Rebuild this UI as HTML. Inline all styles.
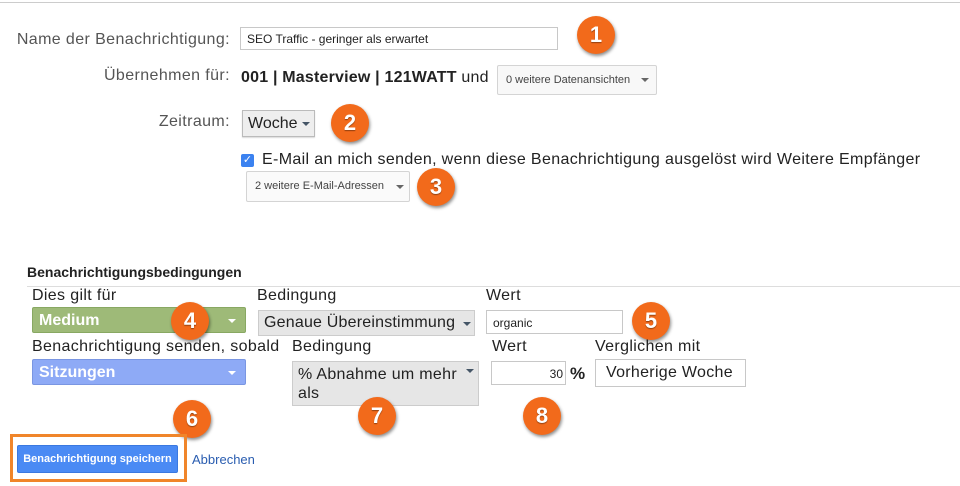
<!DOCTYPE html>
<html><head><meta charset="utf-8"><style>
body{margin:0;width:960px;height:486px;background:#fff;position:relative;overflow:hidden;font-family:"Liberation Sans",Arial,sans-serif;color:#222}
.a{position:absolute;white-space:nowrap}
.lbl{font-size:16px;color:#555;text-align:right;width:230px;left:0;letter-spacing:0.4px}
.c{position:absolute;width:38px;height:38px;border-radius:50%;background:#f26a1b;color:#fff;font-weight:bold;font-size:22px;text-align:center;line-height:38px;box-shadow:1px 2px 3px rgba(0,0,0,.45);text-shadow:0 1px 1px rgba(0,0,0,.4)}
.box{position:absolute;box-sizing:border-box;border:1px solid #c8c8c8;background:#fff}
.dd{position:absolute;box-sizing:border-box;border:1px solid #d4d4d4;border-radius:2px;background:#f8f8f8;font-size:11px;color:#444;padding-left:8px}
.tri{position:absolute;width:0;height:0;border-left:4px solid transparent;border-right:4px solid transparent;border-top:4px solid #666}
.h{font-size:16px;color:#222;letter-spacing:0.35px}
</style></head><body>
<div class="a" style="left:0;top:2px;width:960px;height:1px;background:#ccc"></div>

<div class="a lbl" style="top:31px">Name der Benachrichtigung:</div>
<div class="box" style="left:240px;top:27px;width:318px;height:23px;font-size:12px;padding:4px 6px">SEO Traffic - geringer als erwartet</div>
<div class="c" style="left:577px;top:16px">1</div>

<div class="a lbl" style="top:67px">Übernehmen für:</div>
<div class="a" style="left:241px;top:69px;font-size:16px;letter-spacing:0.2px"><b>001 | Masterview | 121WATT</b> und</div>
<div class="dd" style="left:497px;top:65px;width:160px;height:30px;line-height:28px">0 weitere Datenansichten<span class="tri" style="left:143px;top:12px"></span></div>

<div class="a lbl" style="top:113px">Zeitraum:</div>
<div class="box" style="left:242px;top:110px;width:73px;height:27px;background:#eee;border-color:#bbb;font-size:16px;padding:4px 0 0 5px;box-shadow:0 1px 1px rgba(0,0,0,.15)">Woche<span class="tri" style="left:59px;top:11px;border-top-color:#456"></span></div>
<div class="c" style="left:331px;top:104px">2</div>

<div class="a" style="left:241px;top:154px;width:13px;height:13px;background:#3b82f0;border-radius:2px;color:#fff;font-size:11px;line-height:13px;text-align:center">✓</div>
<div class="a h" style="left:262px;top:151px">E-Mail an mich senden, wenn diese Benachrichtigung ausgelöst wird Weitere Empfänger</div>
<div class="dd" style="left:246px;top:171px;width:164px;height:31px;line-height:29px;background:#fafafa">2 weitere E-Mail-Adressen<span class="tri" style="left:149px;top:13px"></span></div>
<div class="c" style="left:417px;top:168px">3</div>

<div class="a" style="left:27px;top:264px;font-size:14px;font-weight:bold;color:#222">Benachrichtigungsbedingungen</div>
<div class="a" style="left:27px;top:286px;width:933px;height:1px;background:#ddd"></div>

<div class="a h" style="left:32px;top:287px">Dies gilt für</div>
<div class="a" style="left:32px;top:307px;width:214px;height:26px;box-sizing:border-box;background:#9eba78;border:1px solid #88a862;border-radius:2px;color:#fff;font-weight:bold;font-size:16px;padding:4px 0 0 6px">Medium<span class="tri" style="left:195px;top:11px;border-top-color:#fff"></span></div>
<div class="c" style="left:171px;top:302px">4</div>

<div class="a h" style="left:257px;top:287px">Bedingung</div>
<div class="box" style="left:258px;top:310px;width:217px;height:26px;background:#e6e6e6;border-color:#ccc;font-size:16px;padding:3px 0 0 5px;letter-spacing:0.2px">Genaue Übereinstimmung<span class="tri" style="left:204px;top:11px;border-top-color:#456"></span></div>

<div class="a h" style="left:486px;top:287px">Wert</div>
<div class="box" style="left:486px;top:310px;width:137px;height:24px;font-size:12px;padding:5px 6px">organic</div>
<div class="c" style="left:632px;top:302px">5</div>

<div class="a h" style="left:32px;top:338px">Benachrichtigung senden, sobald</div>
<div class="a h" style="left:292px;top:338px">Bedingung</div>
<div class="a" style="left:32px;top:359px;width:214px;height:26px;box-sizing:border-box;background:#8eaaf6;border:1px solid #7a96e2;border-radius:2px;color:#fff;font-weight:bold;font-size:16px;padding:4px 0 0 6px">Sitzungen<span class="tri" style="left:195px;top:11px;border-top-color:#fff"></span></div>
<div class="box" style="left:292px;top:361px;width:187px;height:45px;background:#e6e6e6;border-color:#ccc;font-size:16px;padding:3px 0 0 5px;line-height:19px;white-space:normal;letter-spacing:0.3px">% Abnahme um mehr<br>als<span class="tri" style="left:173px;top:7px;border-top-color:#456"></span></div>

<div class="a h" style="left:492px;top:338px">Wert</div>
<div class="box" style="left:491px;top:361px;width:75px;height:24px;font-size:12px;padding:5px 2px 0 0;text-align:right">30</div>
<div class="a" style="left:570px;top:364px;font-size:17px;font-weight:bold">%</div>
<div class="a h" style="left:595px;top:338px">Verglichen mit</div>
<div class="box" style="left:595px;top:359px;width:151px;height:28px;font-size:16px;padding:4px 0 0 10px;letter-spacing:0.3px">Vorherige Woche</div>

<div class="c" style="left:173px;top:400px">6</div>
<div class="c" style="left:358px;top:397px">7</div>
<div class="c" style="left:523px;top:397px">8</div>

<div class="a" style="left:10px;top:434px;width:177px;height:48px;box-sizing:border-box;border:3px solid #f0852a"></div>
<div class="a" style="left:17px;top:445px;width:161px;height:28px;background:#4a8af4;border:1px solid #3a78e0;box-sizing:border-box;border-radius:2px;color:#fff;font-weight:bold;font-size:11px;text-align:center;line-height:26px">Benachrichtigung speichern</div>
<div class="a" style="left:192px;top:452px;font-size:13px;color:#2a5db0">Abbrechen</div>
</body></html>
